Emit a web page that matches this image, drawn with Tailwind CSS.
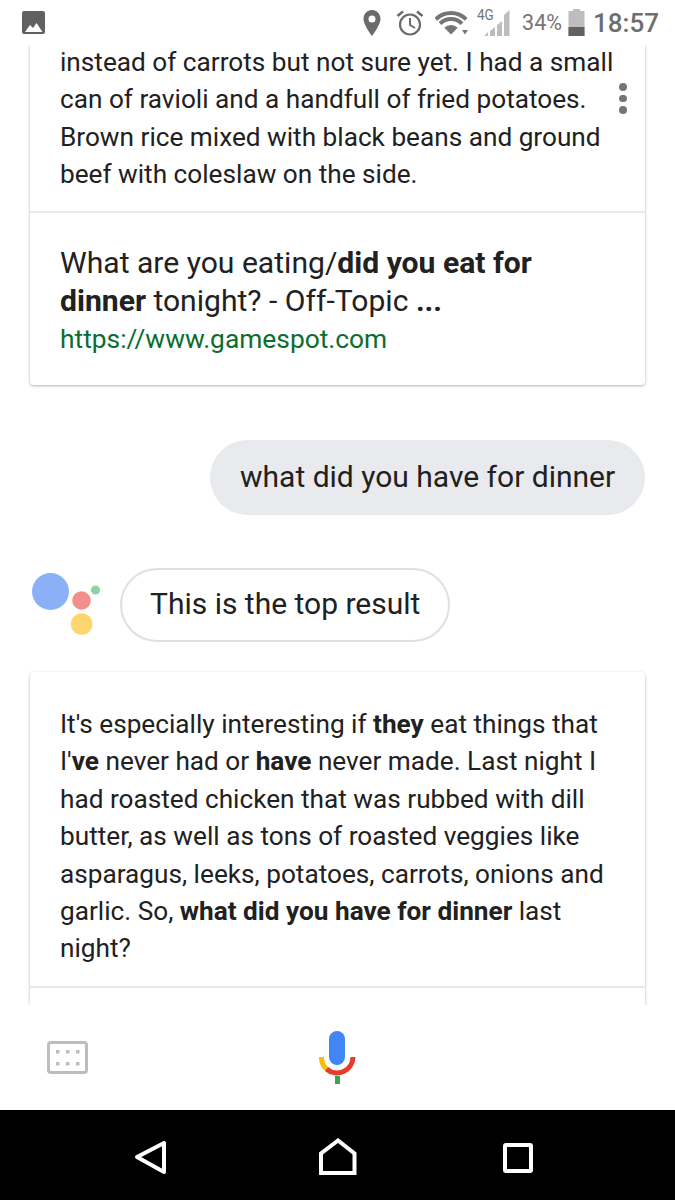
<!DOCTYPE html>
<html lang="en">
  <head>
    <meta charset="UTF-8" />
    <title>Assistant</title>
    <script src="https://cdn.jsdelivr.net/npm/@tailwindcss/browser@4"></script>
  </head>
  <body class="bg-white text-[#212121] font-['Roboto',sans-serif]">
    <div class="w-[675px] h-[1200px] flex flex-col overflow-hidden">
      <!-- status bar -->
      <div class="h-[45px] shrink-0 flex items-center justify-between pl-[22px] pr-[16px] text-[#757575] relative z-10 bg-white">
        <svg width="23" height="23" viewBox="0 0 23 23" class="-mt-[1px]">
          <rect x="0" y="0" width="23" height="23" rx="2" fill="#616161" />
          <path d="M3 21 L8 14 L11 17 L14.500 12 L20.500 21 Z" fill="#fff" />
        </svg>
        <div class="flex items-center">
          <svg width="20" height="28" viewBox="0 0 20 28" class="mr-[13px] mt-[1px]">
            <path fill-rule="evenodd" d="M10 1 C5 1 1.500 5 1.500 10 C1.500 16 10 27 10 27 C10 27 18.500 16 18.500 10 C18.500 5 15 1 10 1 Z M10 6.500 A3.500 3.500 0 1 1 10 13.500 A3.500 3.500 0 1 1 10 6.500 Z" fill="#6b6b6b" />
          </svg>
          <svg width="30" height="28" viewBox="0 0 30 28" fill="none" stroke="#6b6b6b" class="mr-[10px]">
            <circle cx="15" cy="15.500" r="10" stroke-width="2.200" />
            <path d="M15 9 V16 L20 19" stroke-width="2" />
            <path d="M2.500 7 L8 2.500 M27.500 7 L22 2.500" stroke-width="2.600" />
          </svg>
          <svg width="36" height="26" viewBox="0 0 36 26" fill="none" stroke="#757575" stroke-width="4" class="mr-[2px]">
            <path d="M0.800 9.300 A21.500 21.500 0 0 1 31.200 9.300" />
            <path d="M5.040 13.540 A15.500 15.500 0 0 1 26.960 13.540" />
            <path d="M16 24.500 L9.300 17.800 A9.500 9.500 0 0 1 22.700 17.800 Z" fill="#757575" stroke="none" />
            <path d="M27 20 H33 L30 24.500 Z" fill="#757575" stroke="none" />
          </svg>
          <div class="relative w-[40px] h-[32px] mr-[9px]">
            <span class="absolute left-[4px] top-[0px] text-[15px] leading-[16px] text-[#757575] scale-x-90 origin-left">4G</span>
            <svg width="26" height="26" viewBox="0 0 26 26" class="absolute left-[11px] top-[3px]">
              <path d="M0 26 H4 V22 Z M6 26 H11 V17 L6 21 Z M13 26 H18 V11 L13 15 Z M20 26 H25.500 V0 L20 5 Z" fill="#bdbdbd" />
            </svg>
          </div>
          <span class="text-[21.500px] leading-[28px] text-[#757575] mr-[6px]">34%</span>
          <svg width="17" height="28" viewBox="0 0 17 28" class="mr-[8px]">
            <path d="M5 0 H12 V2 H16.500 V27 H0.500 V2 H5 Z" fill="#bdbdbd" />
            <rect x="0.500" y="18" width="16" height="9" fill="#616161" />
          </svg>
          <span class="text-[26px] leading-[30px] font-medium text-[#6e6e6e]">18:57</span>
        </div>
      </div>

      <!-- conversation -->
      <div class="h-[960px] shrink-0 overflow-hidden">
        <div class="relative mx-[30px] w-[615px] h-[341px] -mt-[1px] bg-white rounded-b-[4px] shadow-[0_1px_3px_rgba(0,0,0,0.3)] text-[26.200px] leading-[37.400px]">
          <div class="h-[167px] pl-[30px]">
            <p>instead of carrots but not sure yet. I had a small</p>
            <p>can of ravioli and a handfull of fried potatoes.</p>
            <p>Brown rice mixed with black beans and ground</p>
            <p>beef with coleslaw on the side.</p>
          </div>
          <div class="border-t-[2px] border-[#e8e8e8] pl-[30px] pt-[31px]">
            <p class="text-[30.100px] leading-[38px]">What are you eating/<b class="font-bold">did you eat for</b></p>
            <p class="text-[30.100px] leading-[38px]"><b class="font-bold">dinner</b> tonight? - Off-Topic <b class="font-bold">...</b></p>
            <p class="text-[26.350px] text-[#0b6e2c] leading-[38px]">https://www.gamespot.com</p>
          </div>
          <div class="absolute left-[589px] top-[39px] flex flex-col gap-[4px]">
            <span class="w-[7.500px] h-[7.500px] rounded-full bg-[#757575]"></span>
            <span class="w-[7.500px] h-[7.500px] rounded-full bg-[#757575]"></span>
            <span class="w-[7.500px] h-[7.500px] rounded-full bg-[#757575]"></span>
          </div>
        </div>

        <div class="flex justify-end mt-[55px] pr-[30px]">
          <div class="h-[75px] w-[435px] rounded-[38px] bg-[#e8eaed] flex items-center pl-[30px] pb-[2px] text-[30px]">what did you have for dinner</div>
        </div>

        <div class="flex items-center mt-[53px] pl-[30px]">
          <svg width="72" height="68" viewBox="0 0 72 68" class="mr-[18px]">
            <circle cx="20.500" cy="20.500" r="18.500" fill="#8ab0f7" />
            <circle cx="51.500" cy="29.500" r="9.300" fill="#f28f8c" />
            <circle cx="65.500" cy="19" r="4.600" fill="#8fd3a3" />
            <circle cx="51.700" cy="53" r="10.800" fill="#fdd66e" />
          </svg>
          <div class="h-[74px] w-[330px] rounded-[37px] border-[2px] border-[#e0e0e4] flex items-center pl-[28px] pb-[3px] text-[30px]">This is the top result</div>
        </div>

        <div class="mx-[30px] mt-[30px] w-[615px] h-[400px] bg-white rounded-t-[4px] shadow-[0_1px_3px_rgba(0,0,0,0.3)] text-[26.200px] leading-[37.400px]">
          <div class="h-[314px] pl-[30px] pt-[34px]">
            <p>It's especially interesting if <b class="font-bold">they</b> eat things that</p>
            <p>I'<b class="font-bold">ve</b> never had or <b class="font-bold">have</b> never made. Last night I</p>
            <p>had roasted chicken that was rubbed with dill</p>
            <p>butter, as well as tons of roasted veggies like</p>
            <p>asparagus, leeks, potatoes, carrots, onions and</p>
            <p>garlic. So, <b class="font-bold">what did you have for dinner</b> last</p>
            <p>night?</p>
          </div>
          <div class="border-t-[2px] border-[#e8e8e8]"></div>
        </div>
      </div>

      <!-- input bar -->
      <div class="h-[105px] shrink-0 bg-white relative z-10 flex items-start">
        <svg width="41" height="33" viewBox="0 0 41 33" fill="none" class="ml-[47px] mt-[36px]">
          <rect x="1.500" y="1.500" width="38" height="30" rx="2.500" stroke="#bdbdbd" stroke-width="3" />
          <g fill="#bdbdbd">
            <rect x="9" y="9" width="3.500" height="3.500" /><rect x="19" y="9" width="3.500" height="3.500" /><rect x="29" y="9" width="3.500" height="3.500" />
            <rect x="9" y="21" width="3.500" height="3.500" /><rect x="19" y="21" width="3.500" height="3.500" /><rect x="29" y="21" width="3.500" height="3.500" />
          </g>
        </svg>
        <svg width="38" height="54" viewBox="0 0 38 54" fill="none" class="ml-[231px] mt-[26px]">
          <rect x="10" y="0" width="16" height="34" rx="8" fill="#4285f4" />
          <path d="M2.500 26 A16 16 0 0 0 7.500 38" stroke="#fbbc05" stroke-width="5" />
          <path d="M7.500 38 A16 16 0 0 0 34 26" stroke="#e53c2f" stroke-width="5" />
          <rect x="16" y="45" width="5" height="8" fill="#34a853" />
        </svg>
      </div>

      <!-- nav bar -->
      <div class="h-[90px] shrink-0 bg-black relative flex items-start">
        <svg width="34" height="36" viewBox="0 0 34 36" fill="none" stroke="#fff" stroke-width="4" stroke-linejoin="round" class="ml-[134px] mt-[30px]">
          <path d="M30 3 V32 L3 17 Z" />
        </svg>
        <svg width="38" height="38" viewBox="0 0 38 38" fill="none" stroke="#fff" stroke-width="4" class="ml-[151px] mt-[28px]">
          <path d="M2 35 V15.500 L19 2.500 L35.500 15.500 V35 Z" />
        </svg>
        <svg width="30" height="30" viewBox="0 0 30 30" fill="none" stroke="#fff" stroke-width="4" class="ml-[146px] mt-[33px]">
          <rect x="2" y="2" width="26" height="26" rx="1" />
        </svg>
      </div>
    </div>
  </body>
</html>
